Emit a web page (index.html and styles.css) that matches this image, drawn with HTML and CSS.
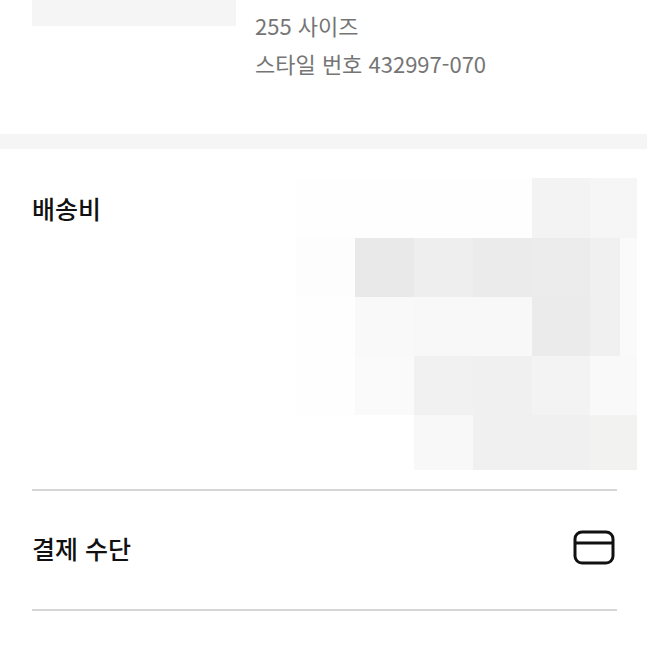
FILE: index.html
```html
<!DOCTYPE html>
<html lang="ko">
<head>
    <meta charset="UTF-8">
    <meta name="viewport" content="width=device-width, initial-scale=1.0">
    <title>주문 정보</title>
    <link rel="stylesheet" href="styles.css">
</head>
<body>
    <section class="product">
        <div class="thumb"></div>
        <div class="product-info">
            <p>255 사이즈</p>
            <p>스타일 번호 432997-070</p>
        </div>
    </section>

    <div class="section-gap"></div>

    <div class="rows">
        <section class="row row-shipping">
            <h2 class="row-title">배송비</h2>
            <div class="mosaic">
                <i class="c-fe"></i><i class="c-fe"></i><i class="c-fe"></i><i class="c-fe"></i><i class="c-f3"></i><i class="wide c-f6"></i>
                <i class="c-fd"></i><i class="c-e9"></i><i class="c-ee"></i><i class="c-eb"></i><i class="c-ec"></i><i class="c-f0"></i><i class="c-fa"></i>
                <i class="c-fe"></i><i class="c-f9"></i><i class="c-f8"></i><i class="c-f8"></i><i class="c-eb"></i><i class="c-f0"></i><i class="c-fa"></i>
                <i class="c-fe"></i><i class="c-fa"></i><i class="c-f1"></i><i class="c-f0"></i><i class="c-f3"></i><i class="wide c-f9"></i>
                <i></i><i></i><i class="c-f8"></i><i class="c-f0"></i><i class="c-f0"></i><i class="wide c-f2"></i>
            </div>
        </section>

        <section class="row row-payment">
            <h2 class="row-title">결제 수단</h2>
            <svg class="card-icon" width="42" height="35" viewBox="0 0 42 35" fill="none" stroke="#111" stroke-width="3">
                <rect x="2" y="2" width="38" height="31" rx="7"/>
                <path d="M2 13h38"/>
            </svg>
        </section>
    </div>
</body>
</html>
```

FILE: styles.css
```css
* {
    box-sizing: border-box;
}
html, body {
    height: 647px;
    margin: 0;
    overflow: hidden;
}
body {
    font-family: "Noto Sans CJK KR", "Noto Sans", sans-serif;
    background: #fff;
}
.product {
    display: flex;
    gap: 19px;
    height: 134px;
    padding-left: 32px;
}
.thumb {
    width: 204px;
    height: 26px;
    background: #f5f5f5;
}
.product-info {
    padding-top: 6px;
    font-size: 22px;
    line-height: 38px;
    color: #757575;
}
.product-info p {
    margin: 0;
}
.section-gap {
    height: 15px;
    background: #f5f5f5;
}
.rows {
    padding: 0 30px 0 32px;
}
.row {
    display: flex;
    justify-content: space-between;
    border-bottom: 2px solid #d6d6d6;
}
.row-title {
    margin: 0;
    font-size: 25px;
    font-weight: 500;
    line-height: 36px;
    color: #111;
}
.row-shipping {
    height: 342px;
    padding-top: 29px;
}
.row-shipping .row-title {
    margin-top: 12px;
}
.row-payment {
    align-items: center;
    height: 120px;
}
.row-payment .row-title {
    margin-top: -5px;
}
.card-icon {
    margin-top: -6px;
    margin-right: 2px;
}
.mosaic {
    display: grid;
    grid-template-columns: 59px 59px 59px 59px 58px 30px 17px;
    grid-template-rows: 60px 59px 59px 59px 55px;
    width: 341px;
    height: 292px;
    margin-right: -20px;
}
.mosaic .wide {
    grid-column: span 2;
}
.c-e9 { background: #e9e9e9; }
.c-eb { background: #ebebeb; }
.c-ec { background: #ececec; }
.c-ee { background: #eeeeee; }
.c-f0 { background: #f0f0f0; }
.c-f1 { background: #f1f1f1; }
.c-f2 { background: #f2f2f0; }
.c-f3 { background: #f3f3f3; }
.c-f6 { background: #f6f6f6; }
.c-f8 { background: #f8f8f8; }
.c-f9 { background: #f9f9f9; }
.c-fa { background: #fafafa; }
.c-fd { background: #fdfdfd; }
.c-fe { background: #fefefe; }
```
